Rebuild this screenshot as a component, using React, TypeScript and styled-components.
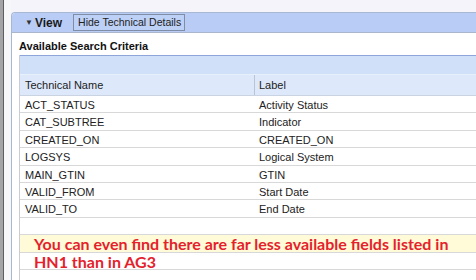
import React from 'react'
import styled, {createGlobalStyle} from 'styled-components'

type Field = {name: string; label: string}

const fields: Field[] = [
  {name: 'ACT_STATUS', label: 'Activity Status'},
  {name: 'CAT_SUBTREE', label: 'Indicator'},
  {name: 'CREATED_ON', label: 'CREATED_ON'},
  {name: 'LOGSYS', label: 'Logical System'},
  {name: 'MAIN_GTIN', label: 'GTIN'},
  {name: 'VALID_FROM', label: 'Start Date'},
  {name: 'VALID_TO', label: 'End Date'}
]

const GlobalStyle = createGlobalStyle`
  *, *::before, *::after {
    box-sizing: border-box;
  }
  html, body {
    margin: 0;
    padding: 0;
    background: #f5f4fa;
    overflow: hidden;
  }
  body {
    font-family: Arial, "Liberation Sans", sans-serif;
    color: #1c1c1c;
  }
`

export default function App() {
  return (
    <Page>
      <GlobalStyle />
      <Edge />
      <Gutter />
      <Panel>
        <Header>
          <Toggle>
            <Caret>▼</Caret>View
          </Toggle>
          <HeaderButton>Hide Technical Details</HeaderButton>
        </Header>
        <Body>
          <Title>Available Search Criteria</Title>
          <Table>
            <Band />
            <HeadRow>
              <HeadCell $width={235}>Technical Name</HeadCell>
              <HeadCell>Label</HeadCell>
            </HeadRow>
            {fields.map((f) => (
              <Row key={f.name}>
                <Cell $width={235}>{f.name}</Cell>
                <Cell>{f.label}</Cell>
              </Row>
            ))}
            <Row />
            <Row $highlight />
            <Row />
            <Row />
            <Note>
              You can even find there are far less available fields listed in
              <br />
              HN1 than in AG3
            </Note>
          </Table>
        </Body>
      </Panel>
    </Page>
  )
}

const Page = styled.div`
  display: flex;
  height: 280px;
  width: 476px;
  overflow: hidden;
`

const Edge = styled.div`
  width: 4px;
  flex: none;
  background: #a4a4a6;
  border-right: 1px solid #5e5e60;
`

const Gutter = styled.div`
  width: 7px;
  flex: none;
  background: #f7f7f9;
`

const Panel = styled.div`
  flex: 1;
  margin-top: 12px;
  background: #fff;
  border-left: 1px solid #a8b8d4;
  border-top: 1px solid #a8b8d4;
  border-top-left-radius: 4px;
  overflow: hidden;
`

const Header = styled.div`
  display: flex;
  align-items: center;
  gap: 11px;
  height: 20px;
  padding-left: 13px;
  background: #b9ccf5;
  border-bottom: 1px solid #a9b6cc;
`

const Toggle = styled.div`
  display: flex;
  align-items: center;
  gap: 2px;
  font-size: 12px;
  font-weight: bold;
  color: #1a1a1a;
`

const Caret = styled.span`
  font-size: 8px;
  color: #333;
`

const HeaderButton = styled.div`
  height: 17px;
  line-height: 15px;
  padding: 0 3px 0 4px;
  border: 1px solid #7f8ea6;
  font-size: 10.5px;
  color: #222;
  background: #bdd0f6;
`

const Body = styled.div`
  padding-left: 7px;
`

const Title = styled.div`
  height: 22px;
  line-height: 27px;
  font-size: 11px;
  font-weight: bold;
  color: #111;
`

const Table = styled.div`
  position: relative;
  border-left: 1px solid #c9ccd2;
`

const Band = styled.div`
  height: 19px;
  background: #d0e0f9;
  border-top: 1px solid #8ea5d9;
`

const HeadRow = styled.div`
  display: flex;
  height: 22px;
  background: #dde9fb;
  border-top: 1px solid #e8f0fc;
  border-bottom: 1px solid #c9d3e2;
`

const HeadCell = styled.div<{$width?: number}>`
  width: ${(p) => (p.$width ? `${p.$width}px` : 'auto')};
  flex: ${(p) => (p.$width ? 'none' : '1')};
  padding-left: ${(p) => (p.$width ? '5px' : '4px')};
  line-height: 20px;
  font-size: 11px;
  color: #222;
  border-right: ${(p) => (p.$width ? '1px solid #b9c4d6' : 'none')};
`

const Row = styled.div<{$highlight?: boolean}>`
  display: flex;
  height: 17.4px;
  border-bottom: 1px solid #d8d8d8;
  background: ${(p) => (p.$highlight ? '#fffbd9' : '#fff')};
`

const Cell = styled.div<{$width?: number}>`
  width: ${(p) => (p.$width ? `${p.$width}px` : 'auto')};
  flex: ${(p) => (p.$width ? 'none' : '1')};
  padding-left: ${(p) => (p.$width ? '5px' : '4px')};
  line-height: 18px;
  font-size: 11px;
  color: #222;
  white-space: nowrap;
`

const Note = styled.div`
  position: absolute;
  left: 14px;
  top: 180px;
  font-family: Lato, "Liberation Sans", sans-serif;
  font-weight: bold;
  font-size: 16px;
  line-height: 18px;
  color: #e4222c;
  white-space: nowrap;
`
